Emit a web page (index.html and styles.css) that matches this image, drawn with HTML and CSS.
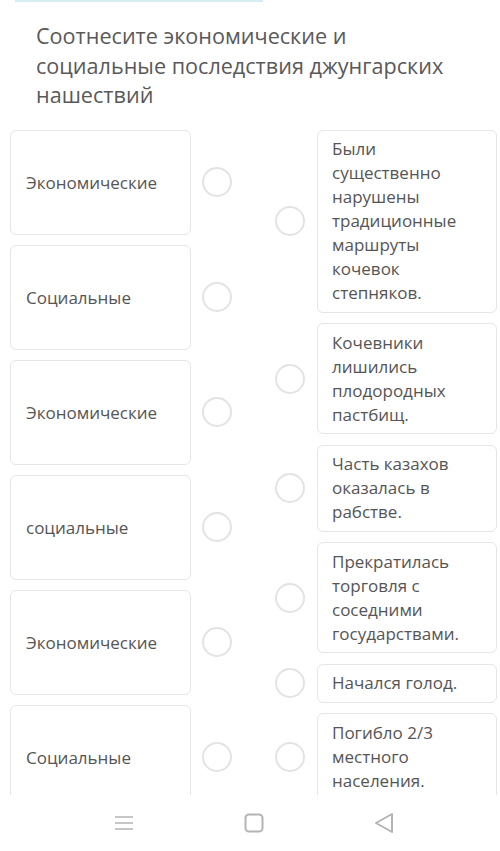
FILE: index.html
```html
<!DOCTYPE html>
<html lang="ru">
<head>
  <meta charset="UTF-8">
  <title>Соотнесите</title>
  <link rel="stylesheet" href="styles.css">
</head>
<body>

<div class="pantalla">
  <div class="progreso"></div>

  <h1 class="pregunta">Соотнесите экономические и социальные последствия джунгарских нашествий</h1>

  <section class="pares">
    <div class="columna izquierda">
      <div class="fila"><div class="tarjeta">Экономические</div><span class="punto"></span></div>
      <div class="fila"><div class="tarjeta">Социальные</div><span class="punto"></span></div>
      <div class="fila"><div class="tarjeta">Экономические</div><span class="punto"></span></div>
      <div class="fila"><div class="tarjeta">социальные</div><span class="punto"></span></div>
      <div class="fila"><div class="tarjeta">Экономические</div><span class="punto"></span></div>
      <div class="fila"><div class="tarjeta">Социальные</div><span class="punto"></span></div>
    </div>

    <div class="columna derecha">
      <div class="fila"><span class="punto"></span><div class="respuesta">Были существенно нарушены традиционные маршруты кочевок степняков.</div></div>
      <div class="fila"><span class="punto"></span><div class="respuesta">Кочевники лишились плодородных пастбищ.</div></div>
      <div class="fila"><span class="punto"></span><div class="respuesta">Часть казахов оказалась в рабстве.</div></div>
      <div class="fila"><span class="punto"></span><div class="respuesta">Прекратилась торговля с соседними государствами.</div></div>
      <div class="fila"><span class="punto"></span><div class="respuesta">Начался голод.</div></div>
      <div class="fila"><span class="punto"></span><div class="respuesta">Погибло 2/3 местного населения.</div></div>
    </div>
  </section>
</div>

<!-- barra de navegación del teléfono -->
<nav class="navegacion">
  <span class="boton">
    <svg width="20" height="16" viewBox="0 0 20 16"><path d="M1 2h18M1 8h18M1 14h18" stroke="#b4b4b4" stroke-width="1.6" fill="none"/></svg>
  </span>
  <span class="boton">
    <svg width="20" height="20" viewBox="0 0 20 20"><rect x="1.5" y="1.5" width="17" height="17" rx="3.5" stroke="#b4b4b4" stroke-width="2" fill="none"/></svg>
  </span>
  <span class="boton">
    <svg width="20" height="22" viewBox="0 0 20 22"><path d="M18 2L2 11l16 9z" stroke="#b4b4b4" stroke-width="2" stroke-linejoin="round" fill="none"/></svg>
  </span>
</nav>

</body>
</html>
```

FILE: styles.css
```css
body {
  font-family: "Open Sans", "Noto Sans", sans-serif;
  background: #fff;
  color: #555;
  margin: 0;
  padding: 0;
}

.pantalla {
  height: 795px;
  overflow: hidden;
}

.progreso {
  width: 248px;
  height: 2px;
  margin-left: 15px;
  background-color: #d6eef3;
}

.pregunta {
  font-size: 21.6px;
  font-weight: normal;
  line-height: 29.5px;
  color: #595959;
  margin: 0;
  padding: 19px 30px 0 36px;
}

.pares {
  display: flex;
  gap: 43px;
  padding: 20px 3px 0 10px;
}

.columna {
  display: flex;
  flex-direction: column;
}

.izquierda {
  gap: 10px;
}

.derecha {
  gap: 10.5px;
}

.fila {
  display: flex;
  align-items: center;
}

.izquierda .fila {
  gap: 11px;
}

.derecha .fila {
  gap: 12px;
}

.tarjeta {
  width: 181px;
  height: 105px;
  box-sizing: border-box;
  display: flex;
  align-items: center;
  padding: 0 15px;
  border: 1.5px solid #e6e6e6;
  border-radius: 6px;
  font-size: 17px;
}

.respuesta {
  width: 180px;
  box-sizing: border-box;
  padding: 6.5px 14px 6.5px 14px;
  border: 1.5px solid #e6e6e6;
  border-radius: 6px;
  font-size: 17px;
  line-height: 24px;
}

.punto {
  width: 30px;
  height: 30px;
  box-sizing: border-box;
  flex-shrink: 0;
  border: 2px solid #e3e3e3;
  border-radius: 50%;
  background: #fff;
}

.navegacion {
  height: 56px;
  display: grid;
  grid-template-columns: repeat(3, 130px);
  justify-content: center;
  align-items: center;
  padding-left: 8px;
  background: #fff;
}

.boton {
  display: flex;
  justify-content: center;
  align-items: center;
}
```
